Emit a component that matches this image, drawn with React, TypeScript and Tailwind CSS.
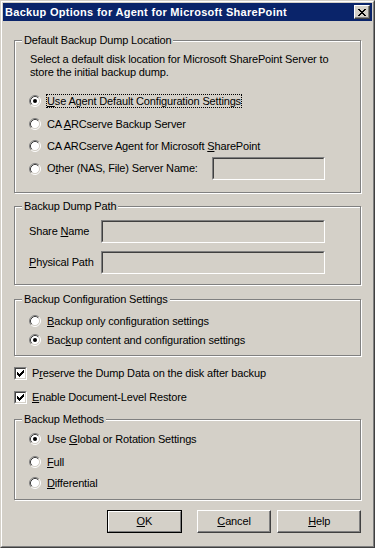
import React from 'react';

const Radio: React.FC<{ on?: boolean }> = ({ on }) => (
  <svg width="12" height="12" viewBox="0 0 12 12" className="shrink-0">
    <circle cx="6" cy="6" r="4.5" fill="#fff" />
    <path d="M2.11 9.89A5.5 5.5 0 0 1 9.89 2.11" fill="none" stroke="#808080" />
    <path d="M9.89 2.11A5.5 5.5 0 0 1 2.11 9.89" fill="none" stroke="#fff" />
    <path d="M2.82 9.18A4.5 4.5 0 0 1 9.18 2.82" fill="none" stroke="#404040" />
    <path d="M9.18 2.82A4.5 4.5 0 0 1 2.82 9.18" fill="none" stroke="#d4d0c8" />
    {on && <circle cx="6" cy="6" r="2" fill="#000" />}
  </svg>
);

const Check: React.FC = () => (
  <span className="block h-[13px] w-[13px] shrink-0 border border-t-[#808080] border-l-[#808080] border-b-white border-r-white">
    <span className="block h-full w-full border border-t-[#404040] border-l-[#404040] border-b-[#d4d0c8] border-r-[#d4d0c8] bg-white">
      <svg width="9" height="9" viewBox="0 0 9 9" shapeRendering="crispEdges" className="block">
        <path
          d="M1 3h1v3H1z M2 4h1v3H2z M3 5h1v3H3z M4 4h1v3H4z M5 3h1v3H5z M6 2h1v3H6z M7 1h1v3H7z"
          fill="#000"
        />
      </svg>
    </span>
  </span>
);

const Edit: React.FC<{ className?: string }> = ({ className }) => (
  <div className={`h-[23px] border border-t-[#808080] border-l-[#808080] border-b-white border-r-white ${className}`}>
    <div className="h-full border border-t-[#404040] border-l-[#404040] border-b-[#d4d0c8] border-r-[#d4d0c8]" />
  </div>
);

const Label: React.FC<{ focus?: boolean; children: React.ReactNode }> = ({ focus, children }) => (
  <span
    className={`border whitespace-nowrap ${focus ? 'border-dotted border-black' : 'border-transparent'}`}
  >
    {children}
  </span>
);

const RadioRow: React.FC<{
  on?: boolean;
  focus?: boolean;
  className?: string;
  children: React.ReactNode;
}> = ({ on, focus, className, children }) => (
  <div className={`flex h-[16px] items-center ${className ?? ''}`}>
    <Radio on={on} />
    <span className="ml-[5px]">
      <Label focus={focus}>{children}</Label>
    </span>
  </div>
);

const CheckRow: React.FC<{ className?: string; children: React.ReactNode }> = ({ className, children }) => (
  <div className={`flex h-[13px] items-center ${className ?? ''}`}>
    <Check />
    <span className="ml-[4px]">
      <Label>{children}</Label>
    </span>
  </div>
);

const Group: React.FC<{ title: string; className?: string; children: React.ReactNode }> = ({
  title,
  className,
  children,
}) => (
  <div
    className={`relative border border-[#808080] pl-[14px] shadow-[1px_1px_0_#fff,inset_1px_1px_0_#fff] ${className}`}
  >
    <span className="absolute -top-[7px] left-[7px] bg-[#d4d0c8] px-[2px] leading-[13px] whitespace-nowrap">
      {title}
    </span>
    {children}
  </div>
);

const Btn: React.FC<{ def?: boolean; className: string; children: React.ReactNode }> = ({
  def,
  className,
  children,
}) => (
  <div className={`h-[23px] ${def ? 'border border-black' : ''} ${className}`}>
    <div
      className={`flex h-full w-full items-center justify-center border border-t-white border-l-white ${
        def ? 'border-b-[#808080] border-r-[#808080]' : 'border-b-[#404040] border-r-[#404040] shadow-[inset_-1px_-1px_0_#808080]'
      }`}
    >
      {children}
    </div>
  </div>
);

export default function App() {
  return (
    <div className="h-[548px] w-[375px] border border-t-[#d4d0c8] border-l-[#d4d0c8] border-b-[#404040] border-r-[#404040] bg-[#d4d0c8] font-['Liberation_Sans',Arial,sans-serif] text-[11px] leading-[13px] tracking-[-0.15px] text-black">
      <div className="h-full border border-t-white border-l-white border-b-[#808080] border-r-[#808080] p-[1px]">
        {/* title bar */}
        <div className="flex h-[18px] items-center bg-[#0a246a] pl-[2px] pr-[2px]">
          <span className="text-[11px] font-bold tracking-[0.3px] text-white">
            Backup Options for Agent for Microsoft SharePoint
          </span>
          <div className="ml-auto flex h-[14px] w-[16px] items-center justify-center border border-t-white border-l-white border-b-[#404040] border-r-[#404040] bg-[#d4d0c8] shadow-[inset_-1px_-1px_0_#808080]">
            <svg width="8" height="7" viewBox="0 0 8 7" shapeRendering="crispEdges" className="-ml-[1px]">
              <path
                d="M0 0h2v1H0z M6 0h2v1H6z M1 1h2v1H1z M5 1h2v1H5z M2 2h4v1H2z M3 3h2v1H3z M2 4h4v1H2z M1 5h2v1H1z M5 5h2v1H5z M0 6h2v1H0z M6 6h2v1H6z"
                fill="#000"
              />
            </svg>
          </div>
        </div>

        <div className="flex flex-col px-[11px]">
          <Group title="Default Backup Dump Location" className="mt-[19px] h-[153px]">
            <p className="ml-[1px] pt-[12px]">
              Select a default disk location for Microsoft SharePoint Server to
              <br />
              store the initial backup dump.
            </p>
            <RadioRow on focus className="mt-[14px]">
              <u>U</u>se Agent Default Configuration Settings
            </RadioRow>
            <RadioRow className="mt-[7px]">
              CA <u>A</u>RCserve Backup Server
            </RadioRow>
            <RadioRow className="mt-[6px]">
              CA ARCserve Agent for Microsoft <u>S</u>harePoint
            </RadioRow>
            <div className="mt-[3px] flex h-[23px] items-center">
              <Radio />
              <span className="ml-[5px]">
                <Label>
                  O<u>t</u>her (NAS, File) Server Name:
                </Label>
              </span>
              <Edit className="ml-auto mr-[35px] w-[113px]" />
            </div>
          </Group>

          <Group title="Backup Dump Path" className="mt-[13px] h-[79px]">
            <div className="mt-[13px] flex h-[23px] items-center">
              <span className="w-[72px]">
                Share <u>N</u>ame
              </span>
              <Edit className="w-[224px]" />
            </div>
            <div className="mt-[8px] flex h-[23px] items-center">
              <span className="w-[72px]">
                <u>P</u>hysical Path
              </span>
              <Edit className="w-[224px]" />
            </div>
          </Group>

          <Group title="Backup Configuration Settings" className="mt-[14px] h-[57px]">
            <RadioRow className="mt-[13px]">
              <u>B</u>ackup only configuration settings
            </RadioRow>
            <RadioRow on className="mt-[3px]">
              Bac<u>k</u>up content and configuration settings
            </RadioRow>
          </Group>

          <CheckRow className="mt-[11px]">
            P<u>r</u>eserve the Dump Data on the disk after backup
          </CheckRow>
          <CheckRow className="mt-[11px]">
            <u>E</u>nable Document-Level Restore
          </CheckRow>

          <Group title="Backup Methods" className="mt-[15px] h-[81px]">
            <RadioRow on className="mt-[11px]">
              Use <u>G</u>lobal or Rotation Settings
            </RadioRow>
            <RadioRow className="mt-[7px]">
              <u>F</u>ull
            </RadioRow>
            <RadioRow className="mt-[5px]">
              <u>D</u>ifferential
            </RadioRow>
          </Group>

          <div className="mt-[10px] ml-[93px] flex">
            <Btn def className="w-[75px]">
              <u>O</u>K
            </Btn>
            <Btn className="ml-[15px] w-[75px]">
              <u>C</u>ancel
            </Btn>
            <Btn className="ml-[6px] w-[84px]">
              <u>H</u>elp
            </Btn>
          </div>
        </div>
      </div>
    </div>
  );
}
